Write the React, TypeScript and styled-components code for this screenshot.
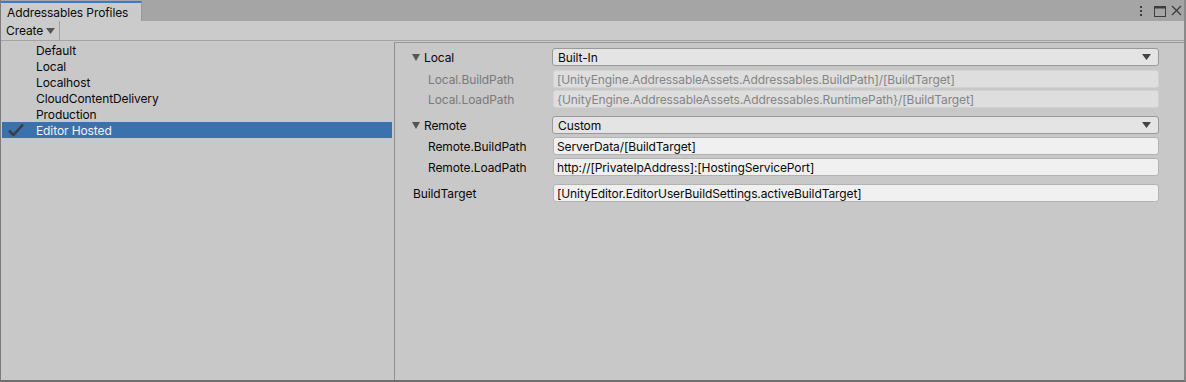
import styled, { createGlobalStyle } from "styled-components";

const GlobalStyle = createGlobalStyle`
  html, body {
    margin: 0;
    padding: 0;
    background: #c8c8c8;
  }
  body {
    font-family: Inter, "Noto Sans", "Liberation Sans", sans-serif;
    font-size: 12px;
    letter-spacing: -0.1px;
    color: #090909;
  }
`;

const Window = styled.div`
  width: 1186px;
  height: 382px;
  box-sizing: border-box;
  display: flex;
  flex-direction: column;
  background: #c8c8c8;
  border-left: 1px solid #7d7d7d;
  border-right: 2px solid #8a8a8a;
  border-bottom: 2px solid #6e6e6e;
  overflow: hidden;
`;

const TabBar = styled.div`
  height: 21px;
  flex-shrink: 0;
  display: flex;
  align-items: stretch;
  background: #a5a5a5;
`;

const Tab = styled.div`
  width: 141px;
  box-sizing: border-box;
  padding: 0 0 0 6px;
  display: flex;
  align-items: center;
  background: #cbcbcb;
  border-top: 2px solid #3a7ad0;
  border-right: 1px solid #999;
  margin-top: 1px;
`;

const WindowIcons = styled.div`
  margin-left: auto;
  display: flex;
  align-items: center;
  gap: 5px;
  padding-right: 2px;
`;

const MenuDots = styled.svg`
  margin-right: 6px;
`;

const Toolbar = styled.div`
  height: 19px;
  flex-shrink: 0;
  display: flex;
  align-items: center;
  background: #cbcbcb;
  border-bottom: 1px solid #a4a4a4;
`;

const ToolbarButton = styled.div`
  height: 100%;
  display: flex;
  align-items: center;
  gap: 3px;
  padding: 0 4px 0 5px;
  border-right: 1px solid #a0a0a0;
`;

const Body = styled.div`
  flex: 1;
  display: flex;
  min-height: 0;
`;

const ListPane = styled.div`
  width: 393px;
  flex-shrink: 0;
  padding-top: 1px;
  box-sizing: border-box;
`;

const ListItem = styled.div<{ $selected?: boolean }>`
  height: 16px;
  display: flex;
  align-items: center;
  position: relative;
  margin: 0 2px 0 1px;
  padding-left: 34px;
  background: ${(p) => (p.$selected ? "#3a72b0" : "transparent")};
  color: ${(p) => (p.$selected ? "#f2f2f2" : "#090909")};
`;

const Check = styled.svg`
  position: absolute;
  left: 6px;
  top: 1px;
`;

const DetailPane = styled.div`
  flex: 1;
  box-sizing: border-box;
  border-left: 1px solid #8f8f8f;
  border-top: 1px solid #999;
  margin-top: 1px;
  padding: 5px 25px 0 17px;
`;

const Row = styled.div<{ $gap: number }>`
  display: flex;
  align-items: center;
  height: 18px;
  margin-top: ${(p) => p.$gap}px;
`;

const Label = styled.div<{ $indent?: number; $disabled?: boolean }>`
  width: 140px;
  flex-shrink: 0;
  box-sizing: border-box;
  padding-left: ${(p) => p.$indent ?? 0}px;
  display: flex;
  align-items: center;
  gap: 4px;
  color: ${(p) => (p.$disabled ? "#7a7a7a" : "#090909")};
`;

const Dropdown = styled.div`
  flex: 1;
  height: 18px;
  box-sizing: border-box;
  border: 1px solid #999;
  border-radius: 3px;
  background: #e4e4e4;
  display: flex;
  align-items: center;
  padding: 0 7px 0 5px;
  justify-content: space-between;
`;

const Field = styled.div<{ $disabled?: boolean }>`
  flex: 1;
  height: 18px;
  margin-left: 1px;
  box-sizing: border-box;
  border: 1px solid ${(p) => (p.$disabled ? "#d2d2d2" : "#b3b3b3")};
  border-radius: 3px;
  background: ${(p) => (p.$disabled ? "#dedede" : "#f0f0f0")};
  color: ${(p) => (p.$disabled ? "#858585" : "#090909")};
  display: flex;
  align-items: center;
  padding: 0 3px;
  white-space: nowrap;
  overflow: hidden;
`;

const Caret = ({ color = "#444" }: { color?: string }) => (
  <svg width="9" height="6" viewBox="0 0 9 6">
    <path d="M0 0 H9 L4.5 6 Z" fill={color} />
  </svg>
);

const Foldout = () => (
  <svg width="8" height="8" viewBox="0 0 8 8">
    <path d="M0 1 H8 L4 8 Z" fill="#555" />
  </svg>
);

const profiles = [
  "Default",
  "Local",
  "Localhost",
  "CloudContentDelivery",
  "Production",
  "Editor Hosted",
];

const App = () => {
  return (
    <>
      <GlobalStyle />
      <Window>
        <TabBar>
          <Tab>Addressables Profiles</Tab>
          <WindowIcons>
            <MenuDots width="4" height="12" viewBox="0 0 4 12">
              <rect x="1" y="1" width="2" height="2" fill="#3c3c3c" />
              <rect x="1" y="5" width="2" height="2" fill="#3c3c3c" />
              <rect x="1" y="9" width="2" height="2" fill="#3c3c3c" />
            </MenuDots>
            <svg width="12" height="12" viewBox="0 0 12 12">
              <rect x="0.5" y="1.5" width="11" height="10" fill="none" stroke="#3c3c3c" />
              <rect x="0.5" y="1.5" width="11" height="2" fill="#3c3c3c" />
            </svg>
            <svg width="11" height="11" viewBox="0 0 11 11">
              <path d="M1 1 L10 10 M10 1 L1 10" stroke="#3c3c3c" strokeWidth="1.3" />
            </svg>
          </WindowIcons>
        </TabBar>
        <Toolbar>
          <ToolbarButton>
            Create
            <Caret color="#555" />
          </ToolbarButton>
        </Toolbar>
        <Body>
          <ListPane>
            {profiles.map((name) => {
              const selected = name === "Editor Hosted";
              return (
                <ListItem key={name} $selected={selected}>
                  {selected && (
                    <Check width="16" height="14" viewBox="0 0 16 14">
                      <path
                        d="M1 7.5 L5.5 12 L15 1.5"
                        fill="none"
                        stroke="#3e3e3e"
                        strokeWidth="2.6"
                        strokeLinejoin="round"
                      />
                    </Check>
                  )}
                  {name}
                </ListItem>
              );
            })}
          </ListPane>
          <DetailPane>
            <Row $gap={0}>
              <Label>
                <Foldout />
                Local
              </Label>
              <Dropdown>
                Built-In
                <Caret />
              </Dropdown>
            </Row>
            <Row $gap={4}>
              <Label $indent={16} $disabled>
                Local.BuildPath
              </Label>
              <Field $disabled>
                [UnityEngine.AddressableAssets.Addressables.BuildPath]/[BuildTarget]
              </Field>
            </Row>
            <Row $gap={2}>
              <Label $indent={16} $disabled>
                Local.LoadPath
              </Label>
              <Field $disabled>
                {"{UnityEngine.AddressableAssets.Addressables.RuntimePath}/[BuildTarget]"}
              </Field>
            </Row>
            <Row $gap={8}>
              <Label>
                <Foldout />
                Remote
              </Label>
              <Dropdown>
                Custom
                <Caret />
              </Dropdown>
            </Row>
            <Row $gap={3}>
              <Label $indent={16}>Remote.BuildPath</Label>
              <Field>ServerData/[BuildTarget]</Field>
            </Row>
            <Row $gap={3}>
              <Label $indent={16}>Remote.LoadPath</Label>
              <Field>http://[PrivateIpAddress]:[HostingServicePort]</Field>
            </Row>
            <Row $gap={8}>
              <Label $indent={1}>BuildTarget</Label>
              <Field>[UnityEditor.EditorUserBuildSettings.activeBuildTarget]</Field>
            </Row>
          </DetailPane>
        </Body>
      </Window>
    </>
  );
};

export default App;
